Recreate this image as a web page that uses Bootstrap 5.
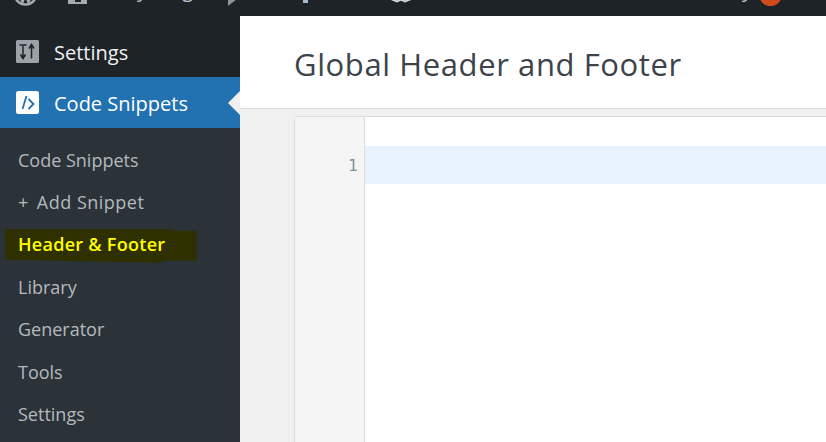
<!DOCTYPE html>
<html lang="en"><head><meta charset="utf-8"><title>Global Header and Footer</title>
<link href="https://cdn.jsdelivr.net/npm/bootstrap@5.3.0/dist/css/bootstrap.min.css" rel="stylesheet">
<style>
html,body{height:100%;overflow:hidden}
body{font-family:"Open Sans","Noto Sans",sans-serif;background:#f0f0f1;width:826px;height:442px}
.topbar{height:16px;flex:none;background:#1d2327;color:#c3c4c7;overflow:hidden;font-size:20px;line-height:26px}
.topbar>*{flex:none}
.wp-logo{margin-left:13px;margin-bottom:10px;display:block}
.home-ic{width:19px;height:14px;margin-left:30px;margin-bottom:12px;background:#a7aaad;position:relative}
.home-ic::after{content:"";position:absolute;left:7px;bottom:2px;width:6px;height:6px;background:#1d2327}
.site-name{margin-left:32px;margin-bottom:13px;width:75px;white-space:nowrap}
.tri{margin-left:34px;margin-bottom:10px;width:0;height:0;border-left:9px solid #8f9498;border-top:7px solid transparent;border-bottom:7px solid transparent}
.bar-tick{margin-left:66px;margin-bottom:13px;width:5px;height:8px;background:#a7b8c9}
.bubble{margin-left:82px;margin-bottom:13px;display:block}
.howdy{margin-left:auto;margin-bottom:13px}
.avatar{width:23px;height:23px;margin:0 44px 10px 7px;border-radius:50%;background:#d04a1c}
.app-row{min-height:0;overflow:hidden}
.sidebar{width:240px;background:#1d2327;flex:none}
.menu-top{height:51px;flex:none;padding-left:16px;font-size:20px;gap:15px;color:#f0f0f1}
.menu-first{height:61px;padding-top:10px}
.menu-label{padding-top:3px}
.menu-active{background:#2271b1;color:#fff;position:relative}
.menu-active::after{content:"";position:absolute;right:0;top:14px;border:12px solid transparent;border-right-color:#f0f0f1;border-left:0}
.ic-box{width:23px;height:23px;flex:none;display:block}
.submenu{background:#2c3338;flex:1;padding-top:11px}
.sub-item{height:42.4px;padding-left:18px;font-size:18px;color:#b4b9be;white-space:nowrap}
.sub-add{letter-spacing:.5px}
.plus-sign{margin-right:4px}
.sub-hl{color:#ff0;font-weight:600;letter-spacing:.28px;position:relative;z-index:0}
.sub-hl::before{content:"";position:absolute;z-index:-1;left:5px;top:5px;width:192px;height:34px;background:#2e3000;clip-path:polygon(0 0,163px 0,168px 2px,192px 2px,192px 32px,160px 32px,155px 34px,0 31px)}
.page-head{height:93px;background:#fff;border-bottom:1px solid #dcdcde;padding-left:54px;padding-top:6px;flex:none}
.page-title{font-size:31px;font-weight:500;color:#3c434a;margin:0;letter-spacing:.6px;font-family:"Open Sans",sans-serif;white-space:nowrap}
.editor-wrap{flex:1;min-height:0;overflow:hidden;padding:7px 0 0 54px}
.editor{background:#fff;border:1px solid #dcdcde;border-right:0;border-radius:4px 0 0 0;height:340px}
.gutter{width:70px;flex:none;background:#f5f5f5;border-right:1px solid #dcdcde;padding-top:29px}
.line-no{height:38px;padding:3px 6px 0 0;font-size:15.500px;color:#7f9298;font-family:"DejaVu Sans",sans-serif}
.code-area{flex:1;padding-top:29px}
.line-active{height:38px;background:#e8f2fc}
</style></head>
<body class="d-flex flex-column">
<div class="topbar d-flex align-items-end">
  <svg class="wp-logo" width="25" height="25" viewBox="0 0 25 25"><circle cx="12.500" cy="12.500" r="11" fill="none" stroke="#a7aaad" stroke-width="2.500"/><path d="M5 9l4.500 12 3-8 3 8L20 9" fill="none" stroke="#a7aaad" stroke-width="2.500"/></svg>
  <span class="home-ic"></span>
  <span class="site-name">My Blog</span><span class="tri"></span>
  <span class="bar-tick"></span>
  <svg class="bubble" width="22" height="10" viewBox="0 0 22 10"><path d="M1 6 L7 8.500 L11 6.500 L15 8.500 L21 6" fill="none" stroke="#d5d6d8" stroke-width="2"/></svg>
  <span class="howdy">Howdy</span><span class="avatar"></span>
</div>
<div class="app-row d-flex flex-grow-1">
  <nav class="sidebar d-flex flex-column">
    <div class="menu-top menu-first d-flex align-items-center">
      <svg class="ic-box" viewBox="0 0 23 23"><rect width="23" height="23" rx="1.500" fill="#9ca2a7"/><path d="M7 6v12M4.500 14.500 7 18.500l2.500-4M15.500 18.500V5M13 8.500l2.500-4 2.500 4M3.500 5h7" fill="none" stroke="#1d2327" stroke-width="1.500"/></svg>
      <span class="menu-label">Settings</span>
    </div>
    <div class="menu-top menu-active d-flex align-items-center">
      <svg class="ic-box" viewBox="0 0 23 23"><rect width="23" height="23" rx="2.500" fill="#fff"/><path d="M10.500 5 6.500 18M12.500 8l5 5-5 5" fill="none" stroke="#2271b1" stroke-width="1.800"/></svg>
      <span class="menu-label">Code Snippets</span>
    </div>
    <div class="submenu">
      <div class="sub-item d-flex align-items-center">Code Snippets</div>
      <div class="sub-item sub-add d-flex align-items-center"><span class="plus-sign">+</span> <span class="ms-1">Add Snippet</span></div>
      <div class="sub-item sub-hl d-flex align-items-center">Header &amp; Footer</div>
      <div class="sub-item d-flex align-items-center">Library</div>
      <div class="sub-item d-flex align-items-center">Generator</div>
      <div class="sub-item d-flex align-items-center">Tools</div>
      <div class="sub-item d-flex align-items-center">Settings</div>
    </div>
  </nav>
  <main class="flex-grow-1 d-flex flex-column">
    <div class="page-head d-flex align-items-center"><h1 class="page-title">Global Header and Footer</h1></div>
    <div class="editor-wrap">
      <div class="editor d-flex">
        <div class="gutter"><div class="line-no d-flex align-items-center justify-content-end">1</div></div>
        <div class="code-area"><div class="line-active"></div></div>
      </div>
    </div>
  </main>
</div>
</body></html>
